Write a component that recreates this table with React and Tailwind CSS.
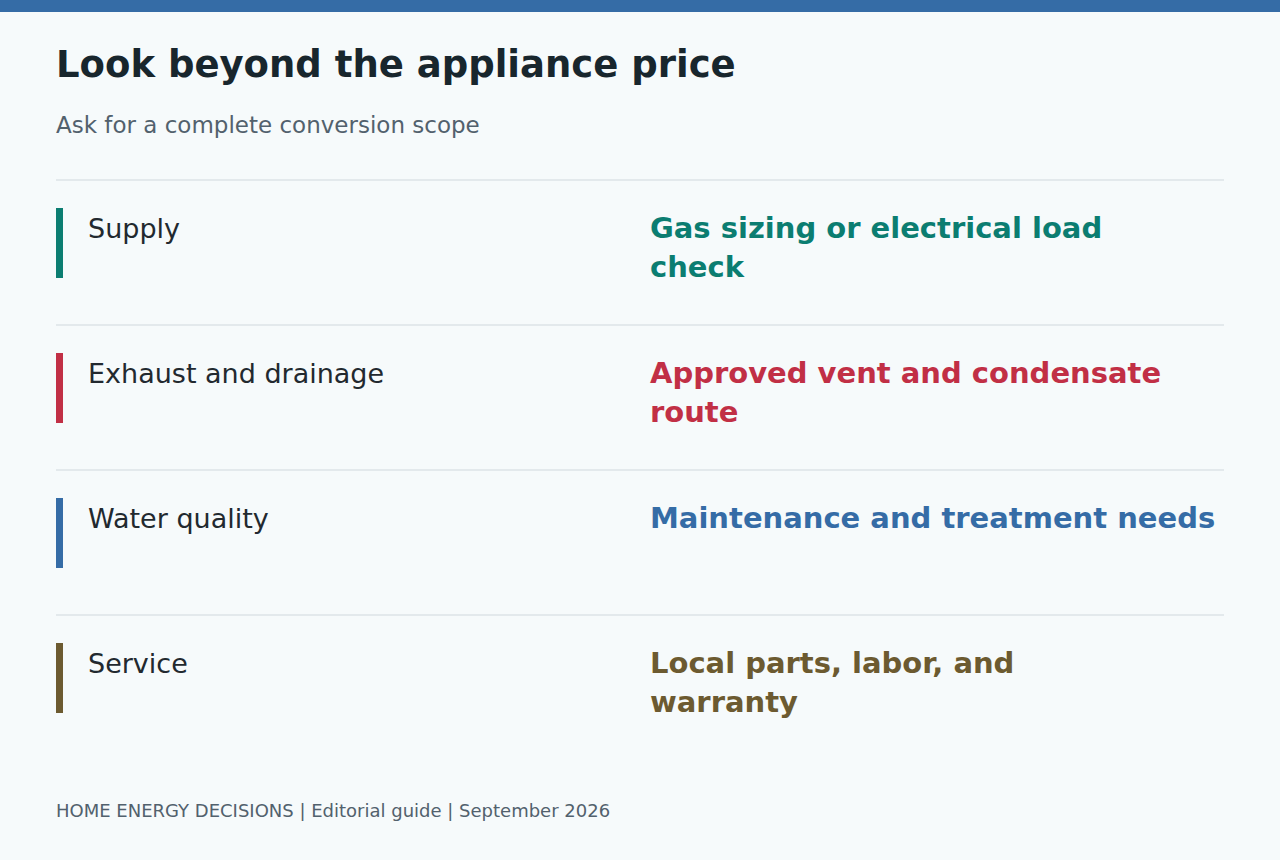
import React from 'react';

const rows = [
    { label: 'Supply', lines: ['Gas sizing or electrical load', 'check'], bar: 'bg-[#0b7d71]', text: 'text-[#0b7d71]' },
    { label: 'Exhaust and drainage', lines: ['Approved vent and condensate', 'route'], bar: 'bg-[#c12f45]', text: 'text-[#c12f45]' },
    { label: 'Water quality', lines: ['Maintenance and treatment needs'], bar: 'bg-[#356ca6]', text: 'text-[#356ca6]' },
    { label: 'Service', lines: ['Local parts, labor, and', 'warranty'], bar: 'bg-[#6c5a30]', text: 'text-[#6c5a30]' },
];

const ScopeRow = ({ row }) => {
    return (
        <div className="h-[145px] border-t-2 border-[#e3e9ec] pt-[27px] flex items-start">
            <div className="w-[594px] flex items-start shrink-0">
                <div className={`w-[7px] h-[70px] ${row.bar}`} />
                <div className="ml-[25px] text-[27px] leading-[41px] text-[#22292f]">{row.label}</div>
            </div>
            <div className={`mt-px text-[29px] leading-[39px] font-bold ${row.text}`}>
                {row.lines.map((line) => (
                    <div key={line}>{line}</div>
                ))}
            </div>
        </div>
    );
};

export default function App() {
    return (
        <div className="w-[1280px] h-[860px] bg-[#f6fafb] overflow-hidden" style={{ fontFamily: '"DejaVu Sans", sans-serif' }}>
            <div className="h-3 bg-[#356ca6]" />
            <div className="px-14 pt-[31px]">
                <h1 className="text-[37px] leading-[44px] font-bold text-[#18262d]">Look beyond the appliance price</h1>
                <p className="mt-6 text-[23px] leading-[28px] text-[#52616d]">Ask for a complete conversion scope</p>

                <div className="mt-10">
                    {rows.map((row) => (
                        <ScopeRow key={row.label} row={row} />
                    ))}
                </div>

                <div className="mt-[41px] text-[18px] leading-[22px] text-[#52616d]">
                    HOME ENERGY DECISIONS | Editorial guide | September 2026
                </div>
            </div>
        </div>
    );
}
